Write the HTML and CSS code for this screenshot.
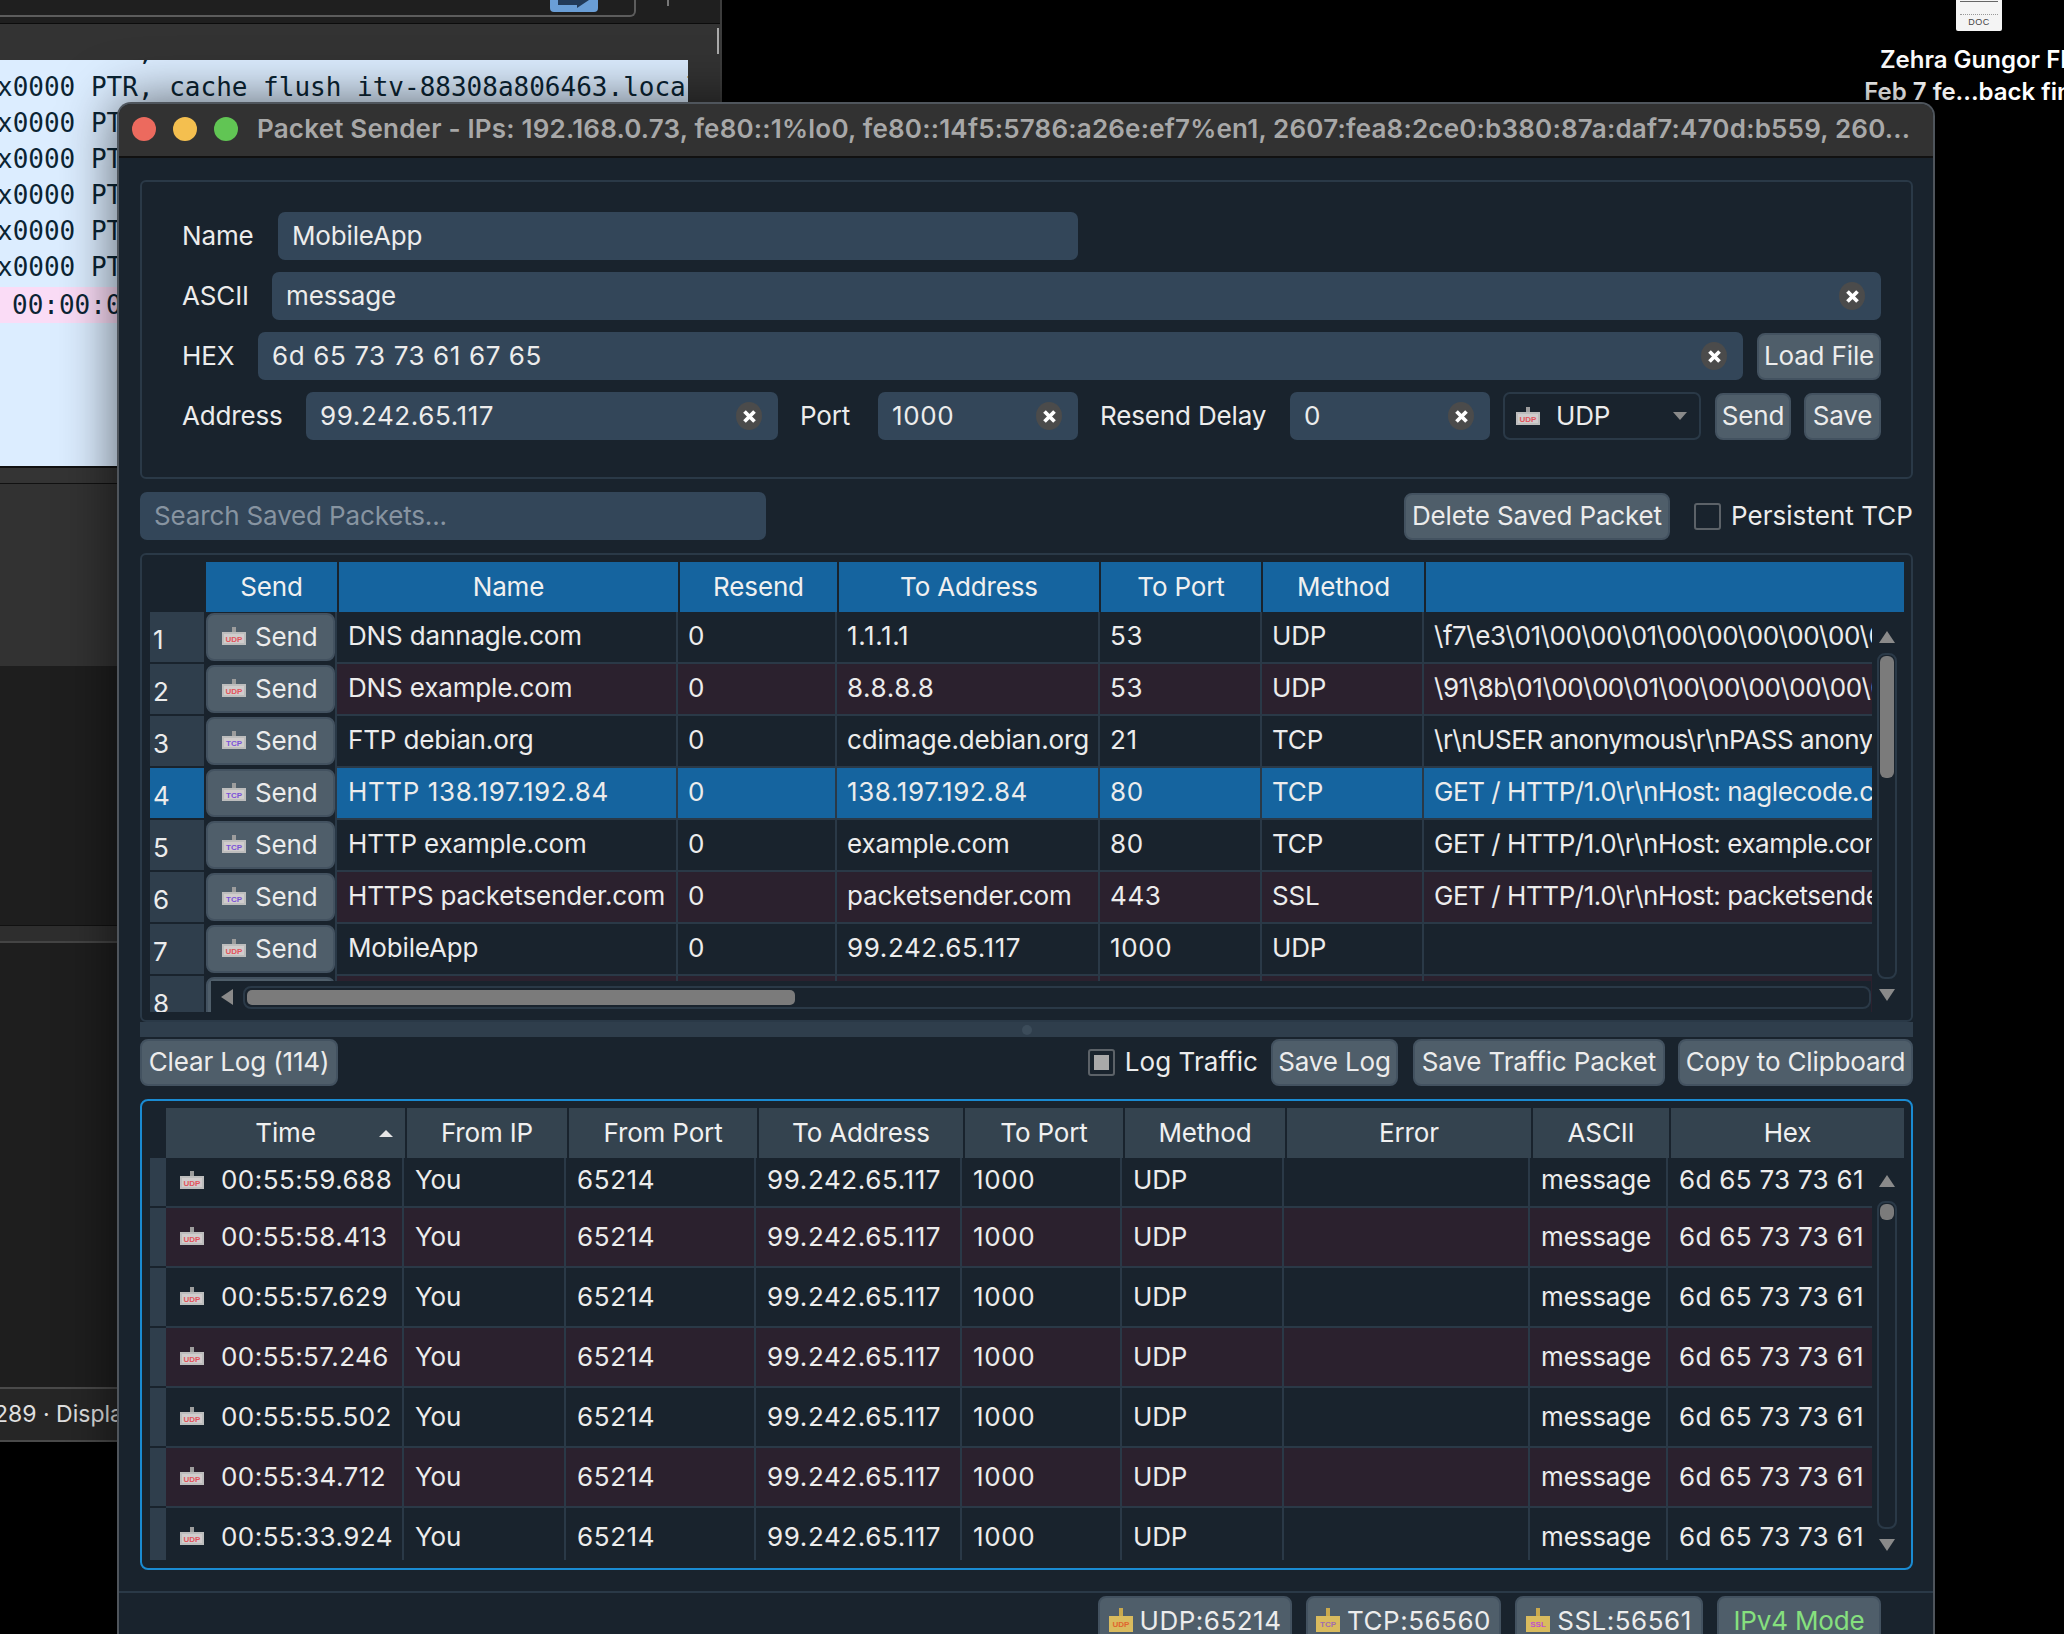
FILE: index.html
```html
<!DOCTYPE html>
<html lang="en">
<head>
    <meta charset="UTF-8">
    <meta name="viewport" content="width=device-width, initial-scale=1.0">
    <title>Packet Sender</title>
    <link rel="stylesheet" href="styles.css">
</head>
<body>
    <svg class="defs" width="0" height="0">
        <symbol id="pk-udp" viewBox="0 0 24 18">
            <path d="M10 0h4v5h-4z" fill="#9d9d9d"/><path d="M0 5h24v13H0z" fill="#bdbdbd"/><path d="M2 7h20v9H2z" fill="#d0cccc"/>
            <text x="12" y="14.5" class="pk-txt" fill="#e2545c">UDP</text>
        </symbol>
        <symbol id="pk-tcp" viewBox="0 0 24 18">
            <path d="M10 0h4v5h-4z" fill="#9d9d9d"/><path d="M0 5h24v13H0z" fill="#bdbdbd"/><path d="M2 7h20v9H2z" fill="#d0cccc"/>
            <text x="12" y="14.5" class="pk-txt" fill="#7a52d8">TCP</text>
        </symbol>
        <symbol id="st-udp" viewBox="0 0 24 24">
            <path d="M10 0h4v8h-4z" fill="#c9a94e"/><path d="M0 8h24v16H0z" fill="#d9bb5e"/>
            <text x="12" y="19" class="pk-txt" fill="#e0662e">UDP</text>
        </symbol>
        <symbol id="st-tcp" viewBox="0 0 24 24">
            <path d="M10 0h4v8h-4z" fill="#c9a94e"/><path d="M0 8h24v16H0z" fill="#d9bb5e"/>
            <text x="12" y="19" class="pk-txt" fill="#a06cb0">TCP</text>
        </symbol>
        <symbol id="st-ssl" viewBox="0 0 24 24">
            <path d="M10 0h4v8h-4z" fill="#c9a94e"/><path d="M0 8h24v16H0z" fill="#d9bb5e"/>
            <text x="12" y="19" class="pk-txt" fill="#c04fd0">SSL</text>
        </symbol>
        <symbol id="x-mark" viewBox="0 0 12 12">
            <path d="M2 2l8 8M10 2l-8 8" stroke="#fff" stroke-width="3" fill="none"/>
        </symbol>
    </svg>

    <!-- window behind -->
    <div class="term">
        <div class="term-top">
            <div class="term-box"><span class="term-btn"><svg width="32" height="12" viewBox="0 0 32 12"><path d="M0 0H31L19 8V5H0Z" fill="#223a58"/></svg></span></div>
            <span class="term-tick"></span>
        </div>
        <div class="term-bar"><span class="term-mark"></span></div>
        <div class="term-mid">
            <div class="term-list">
                <div class="term-row">x0000 PTR, cache flush itv-88308a806463.local</div>
                <div class="term-row">x0000 PTR, cache flush itv-88308a806463.local</div>
                <div class="term-row">x0000 PTR, cache flush itv-88308a806463.local</div>
                <div class="term-row">x0000 PTR, cache flush itv-88308a806463.local</div>
                <div class="term-row">x0000 PTR, cache flush itv-88308a806463.local</div>
                <div class="term-row">x0000 PTR, cache flush itv-88308a806463.local</div>
                <div class="term-row">x0000 PTR, cache flush itv-88308a806463.local</div>
                <div class="term-row term-pink">00:00:00.000000</div>
            </div>
        </div>
        <div class="term-a"></div>
        <div class="term-b"></div>
        <div class="term-c"></div>
        <div class="term-d"></div>
        <div class="term-e"></div>
        <div class="term-status">289 · Displaying 289</div>
    </div>

    <!-- desktop file -->
    <div class="doc">
        <div class="doc-icon"><span class="doc-lines"></span><span class="doc-tag">DOC</span></div>
        <div class="doc-name">Zehra Gungor FB<br>Feb 7 fe...back final</div>
    </div>

    <div class="app">
        <div class="titlebar">
            <span class="dot dot-r"></span><span class="dot dot-y"></span><span class="dot dot-g"></span>
            <span class="title">Packet Sender - IPs: 192.168.0.73, fe80::1%lo0, fe80::14f5:5786:a26e:ef7%en1, 2607:fea8:2ce0:b380:87a:daf7:470d:b559, 260...</span>
        </div>

        <div class="content">
            <div class="group">
                <div class="form-row">
                    <label class="lbl lbl-name">Name</label>
                    <div class="field f-name"><span class="val">MobileApp</span></div>
                </div>
                <div class="form-row">
                    <label class="lbl lbl-ascii">ASCII</label>
                    <div class="field f-grow"><span class="val">message</span><span class="clear"><svg width="15" height="15"><use href="#x-mark"/></svg></span></div>
                </div>
                <div class="form-row">
                    <label class="lbl lbl-hex">HEX</label>
                    <div class="field f-grow"><span class="val num">6d 65 73 73 61 67 65</span><span class="clear"><svg width="15" height="15"><use href="#x-mark"/></svg></span></div>
                    <button class="btn btn-load">Load File</button>
                </div>
                <div class="form-row">
                    <label class="lbl lbl-addr">Address</label>
                    <div class="field f-addr"><span class="val num">99.242.65.117</span><span class="clear"><svg width="15" height="15"><use href="#x-mark"/></svg></span></div>
                    <label class="lbl lbl-port">Port</label>
                    <div class="field f-port"><span class="val num">1000</span><span class="clear"><svg width="15" height="15"><use href="#x-mark"/></svg></span></div>
                    <label class="lbl lbl-delay">Resend Delay</label>
                    <div class="field f-delay"><span class="val">0</span><span class="clear"><svg width="15" height="15"><use href="#x-mark"/></svg></span></div>
                    <div class="combo"><svg class="pk" width="24" height="18"><use href="#pk-udp"/></svg><span class="combo-val">UDP</span><span class="tri-down"></span></div>
                    <button class="btn btn-send">Send</button>
                    <button class="btn btn-save">Save</button>
                </div>
            </div>

            <div class="search-row">
                <div class="field f-search"><span class="val placeholder">Search Saved Packets...</span></div>
                <button class="btn btn-delete">Delete Saved Packet</button>
                <span class="check"></span>
                <span class="check-lbl">Persistent TCP</span>
            </div>

            <div class="frame saved">
                <div class="thead saved-cols">
                    <div class="th">Send</div>
                    <div class="th">Name</div>
                    <div class="th">Resend</div>
                    <div class="th">To Address</div>
                    <div class="th">To Port</div>
                    <div class="th">Method</div>
                    <div class="th"></div>
                </div>
                <div class="tbody saved-body">
                    <div class="tr saved-row">
                        <div class="rh">1</div>
                        <div class="td td-send"><button class="btn btn-row"><svg class="pk" width="24" height="18"><use href="#pk-udp"/></svg>Send</button></div>
                        <div class="td">DNS dannagle.com</div><div class="td">0</div><div class="td num">1.1.1.1</div><div class="td num">53</div><div class="td">UDP</div>
                        <div class="td">\f7\e3\01\00\00\01\00\00\00\00\00\00\08dannagle</div>
                    </div>
                    <div class="tr saved-row alt">
                        <div class="rh">2</div>
                        <div class="td td-send"><button class="btn btn-row"><svg class="pk" width="24" height="18"><use href="#pk-udp"/></svg>Send</button></div>
                        <div class="td">DNS example.com</div><div class="td">0</div><div class="td num">8.8.8.8</div><div class="td num">53</div><div class="td">UDP</div>
                        <div class="td">\91\8b\01\00\00\01\00\00\00\00\00\00\07example</div>
                    </div>
                    <div class="tr saved-row">
                        <div class="rh">3</div>
                        <div class="td td-send"><button class="btn btn-row"><svg class="pk" width="24" height="18"><use href="#pk-tcp"/></svg>Send</button></div>
                        <div class="td">FTP debian.org</div><div class="td">0</div><div class="td">cdimage.debian.org</div><div class="td num">21</div><div class="td">TCP</div>
                        <div class="td">\r\nUSER anonymous\r\nPASS anonymous\r\n</div>
                    </div>
                    <div class="tr saved-row sel">
                        <div class="rh">4</div>
                        <div class="td td-send"><button class="btn btn-row"><svg class="pk" width="24" height="18"><use href="#pk-tcp"/></svg>Send</button></div>
                        <div class="td num">HTTP 138.197.192.84</div><div class="td">0</div><div class="td num">138.197.192.84</div><div class="td num">80</div><div class="td">TCP</div>
                        <div class="td">GET / HTTP/1.0\r\nHost: naglecode.com\r\n</div>
                    </div>
                    <div class="tr saved-row">
                        <div class="rh">5</div>
                        <div class="td td-send"><button class="btn btn-row"><svg class="pk" width="24" height="18"><use href="#pk-tcp"/></svg>Send</button></div>
                        <div class="td">HTTP example.com</div><div class="td">0</div><div class="td">example.com</div><div class="td num">80</div><div class="td">TCP</div>
                        <div class="td">GET / HTTP/1.0\r\nHost: example.com\r\n</div>
                    </div>
                    <div class="tr saved-row alt">
                        <div class="rh">6</div>
                        <div class="td td-send"><button class="btn btn-row"><svg class="pk" width="24" height="18"><use href="#pk-tcp"/></svg>Send</button></div>
                        <div class="td">HTTPS packetsender.com</div><div class="td">0</div><div class="td">packetsender.com</div><div class="td num">443</div><div class="td">SSL</div>
                        <div class="td">GET / HTTP/1.0\r\nHost: packetsender.com</div>
                    </div>
                    <div class="tr saved-row">
                        <div class="rh">7</div>
                        <div class="td td-send"><button class="btn btn-row"><svg class="pk" width="24" height="18"><use href="#pk-udp"/></svg>Send</button></div>
                        <div class="td">MobileApp</div><div class="td">0</div><div class="td num">99.242.65.117</div><div class="td num">1000</div><div class="td">UDP</div>
                        <div class="td"></div>
                    </div>
                    <div class="tr saved-row alt">
                        <div class="rh">8</div>
                        <div class="td td-send"><button class="btn btn-row"></button></div>
                        <div class="td"></div><div class="td"></div><div class="td"></div><div class="td"></div><div class="td"></div><div class="td"></div>
                    </div>
                </div>
                <!-- scrollbars lie over the table -->
                <div class="vbar saved-vbar"><span class="tri-up"></span><div class="vtrack"><span class="vthumb"></span></div><span class="tri-dn"></span></div>
                <div class="hbar"><span class="tri-left"></span><div class="htrack"><span class="hthumb"></span></div></div>
            </div>

            <div class="splitter"><span class="split-dot"></span></div>

            <div class="logbar">
                <button class="btn btn-clear">Clear Log (114)</button>
                <span class="check check-on"></span>
                <span class="check-lbl">Log Traffic</span>
                <button class="btn btn-savelog">Save Log</button>
                <button class="btn btn-savetraffic">Save Traffic Packet</button>
                <button class="btn btn-copy">Copy to Clipboard</button>
            </div>

            <div class="frame logs">
                <div class="thead log-cols">
                    <div class="th th-sort">Time<span class="sort-up"></span></div>
                    <div class="th">From IP</div>
                    <div class="th">From Port</div>
                    <div class="th">To Address</div>
                    <div class="th">To Port</div>
                    <div class="th">Method</div>
                    <div class="th">Error</div>
                    <div class="th">ASCII</div>
                    <div class="th">Hex</div>
                </div>
                <div class="tbody log-body">
                    <div class="tr log-row log-first">
                        <div class="rh"></div>
                        <div class="td td-time num"><svg class="pk" width="24" height="18"><use href="#pk-udp"/></svg>00:55:59.688</div>
                        <div class="td">You</div><div class="td num">65214</div><div class="td num">99.242.65.117</div><div class="td num">1000</div><div class="td">UDP</div><div class="td"></div><div class="td">message</div><div class="td num">6d 65 73 73 61</div>
                    </div>
                    <div class="tr log-row alt">
                        <div class="rh"></div>
                        <div class="td td-time num"><svg class="pk" width="24" height="18"><use href="#pk-udp"/></svg>00:55:58.413</div>
                        <div class="td">You</div><div class="td num">65214</div><div class="td num">99.242.65.117</div><div class="td num">1000</div><div class="td">UDP</div><div class="td"></div><div class="td">message</div><div class="td num">6d 65 73 73 61</div>
                    </div>
                    <div class="tr log-row">
                        <div class="rh"></div>
                        <div class="td td-time num"><svg class="pk" width="24" height="18"><use href="#pk-udp"/></svg>00:55:57.629</div>
                        <div class="td">You</div><div class="td num">65214</div><div class="td num">99.242.65.117</div><div class="td num">1000</div><div class="td">UDP</div><div class="td"></div><div class="td">message</div><div class="td num">6d 65 73 73 61</div>
                    </div>
                    <div class="tr log-row alt">
                        <div class="rh"></div>
                        <div class="td td-time num"><svg class="pk" width="24" height="18"><use href="#pk-udp"/></svg>00:55:57.246</div>
                        <div class="td">You</div><div class="td num">65214</div><div class="td num">99.242.65.117</div><div class="td num">1000</div><div class="td">UDP</div><div class="td"></div><div class="td">message</div><div class="td num">6d 65 73 73 61</div>
                    </div>
                    <div class="tr log-row">
                        <div class="rh"></div>
                        <div class="td td-time num"><svg class="pk" width="24" height="18"><use href="#pk-udp"/></svg>00:55:55.502</div>
                        <div class="td">You</div><div class="td num">65214</div><div class="td num">99.242.65.117</div><div class="td num">1000</div><div class="td">UDP</div><div class="td"></div><div class="td">message</div><div class="td num">6d 65 73 73 61</div>
                    </div>
                    <div class="tr log-row alt">
                        <div class="rh"></div>
                        <div class="td td-time num"><svg class="pk" width="24" height="18"><use href="#pk-udp"/></svg>00:55:34.712</div>
                        <div class="td">You</div><div class="td num">65214</div><div class="td num">99.242.65.117</div><div class="td num">1000</div><div class="td">UDP</div><div class="td"></div><div class="td">message</div><div class="td num">6d 65 73 73 61</div>
                    </div>
                    <div class="tr log-row">
                        <div class="rh"></div>
                        <div class="td td-time num"><svg class="pk" width="24" height="18"><use href="#pk-udp"/></svg>00:55:33.924</div>
                        <div class="td">You</div><div class="td num">65214</div><div class="td num">99.242.65.117</div><div class="td num">1000</div><div class="td">UDP</div><div class="td"></div><div class="td">message</div><div class="td num">6d 65 73 73 61</div>
                    </div>
                </div>
                <div class="vbar log-vbar"><span class="tri-up"></span><div class="vtrack"><span class="vthumb"></span></div><span class="tri-dn"></span></div>
            </div>
        </div>

        <div class="statusbar">
            <button class="btn st st-udp num"><svg width="24" height="24"><use href="#st-udp"/></svg>UDP:65214</button>
            <button class="btn st st-tcp num"><svg width="24" height="24"><use href="#st-tcp"/></svg>TCP:56560</button>
            <button class="btn st st-ssl num"><svg width="24" height="24"><use href="#st-ssl"/></svg>SSL:56561</button>
            <button class="btn st st-mode">IPv4 Mode</button>
        </div>
    </div>
</body>
</html>
```

FILE: styles.css
```css
* {
    box-sizing: border-box;
}
html, body {
    margin: 0;
    height: 100%;
}
body {
    position: relative;
    width: 2064px;
    height: 1634px;
    overflow: hidden;
    background: #000;
    font-family: "Inter", "Liberation Sans", sans-serif;
    font-size: 26px;
    letter-spacing: -0.15px;
    color: #ececec;
}
.defs {
    position: absolute;
}
.pk-txt {
    font-family: "Liberation Sans", sans-serif;
    font-size: 8px;
    font-weight: 700;
    text-anchor: middle;
    letter-spacing: 0;
}

/* window behind */
.term {
    position: absolute;
    left: 0;
    top: 0;
    width: 722px;
    height: 1442px;
    background: #1e1e1e;
    border-right: 2px solid #3c3c3c;
    overflow: hidden;
}
.term-top {
    height: 24px;
    background: #1f1f1f;
    border-bottom: 1px solid #0c0c0c;
    position: relative;
}
.term-box {
    width: 636px;
    height: 17px;
    border-right: 2px solid #5c5c5c;
    border-bottom: 2px solid #5c5c5c;
    border-bottom-right-radius: 6px;
    padding-left: 550px;
}
.term-btn {
    display: block;
    width: 48px;
    height: 12px;
    background: #6a9ed6;
    border-radius: 0 0 4px 4px;
    padding-left: 8px;
    overflow: hidden;
}
.term-btn svg {
    display: block;
}
.term-tick {
    position: absolute;
    left: 667px;
    top: 0;
    width: 2px;
    height: 6px;
    background: #777;
}
.term-bar {
    height: 36px;
    background: #333;
    position: relative;
}
.term-mark {
    position: absolute;
    left: 717px;
    top: 4px;
    width: 2px;
    height: 26px;
    background: #aaa;
}
.term-mid {
    background: #333;
    height: 408px;
    border-bottom: 2px solid #111;
}
.term-list {
    width: 688px;
    height: 406px;
    background: #dcedff;
    overflow: hidden;
    font-family: "DejaVu Sans Mono", monospace;
    font-size: 26px;
    letter-spacing: 0;
    color: #0b2433;
    white-space: nowrap;
}
.term-row {
    height: 36px;
    line-height: 36px;
    margin-left: -3px;
    position: relative;
    top: -27px;
}
.term-pink {
    background: #fadcf6;
    margin-left: 0;
    padding-left: 12px;
    margin-top: 2px;
}
.term-a {
    height: 16px;
    background: #343434;
    border-bottom: 1px solid #111;
}
.term-b {
    height: 182px;
    background: #323232;
}
.term-c {
    height: 260px;
    background: #1e1e1e;
    border-bottom: 1px solid #111;
}
.term-d {
    height: 17px;
    background: #2e2e2e;
    border-bottom: 2px solid #444;
}
.term-e {
    height: 444px;
    background: #1e1e1e;
}
.term-status {
    height: 55px;
    line-height: 51px;
    background: #262626;
    border-top: 2px solid #4a4a4a;
    border-bottom: 2px solid #4a4a4a;
    margin-left: -6px;
    font-size: 23px;
    letter-spacing: 0;
    color: #e0e0e0;
    white-space: nowrap;
}

/* desktop file */
.doc {
    position: absolute;
    left: 1848px;
    top: 0;
    width: 260px;
    text-align: center;
}
.doc-icon {
    width: 46px;
    height: 31px;
    margin: 0 0 0 108px;
    background: #f4f4f4;
    border-radius: 0 0 2px 2px;
    padding: 1px 4px 0;
    color: #444;
    font-size: 9px;
    letter-spacing: 0.5px;
}
.doc-lines {
    display: block;
    height: 14px;
    border-top: 1px solid #666;
    border-bottom: 1px dotted #999;
}
.doc-tag {
    display: block;
    font-family: "Liberation Sans", sans-serif;
    line-height: 14px;
}
.doc-name {
    margin-top: 13px;
    font-weight: 600;
    font-size: 24px;
    line-height: 32px;
    color: #fff;
    white-space: nowrap;
    letter-spacing: 0;
}

/* main window */
.app {
    position: absolute;
    left: 117px;
    top: 102px;
    width: 1818px;
    height: 1532px;
    background: #19232d;
    border: 2px solid #4f555c;
    border-bottom: 0;
    border-radius: 14px 14px 0 0;
    box-shadow: 0 0 55px rgba(0, 0, 0, 0.6);
    overflow: hidden;
}
.titlebar {
    height: 54px;
    background: #323232;
    border-bottom: 2px solid #111;
    display: flex;
    align-items: center;
    padding: 0 0 2px 15px;
    margin-left: -2px;
    margin-right: -2px;
}
.dot {
    width: 24px;
    height: 24px;
    border-radius: 50%;
    margin-right: 17px;
    flex: none;
}
.dot-r { background: #ec6a5e; }
.dot-y { background: #f4bf4f; }
.dot-g { background: #61c554; }
.title {
    font-weight: 600;
    color: #a8a8a8;
    white-space: nowrap;
    margin-left: 2px;
    letter-spacing: 0.2px;
    padding-bottom: 2px;
}
.content {
    padding: 22px 20px 0 21px;
    height: 1433px;
}
.num {
    letter-spacing: 0.6px;
}

.group {
    height: 299px;
    border: 2px solid #2a3947;
    border-radius: 6px;
    padding: 30px 30px 0 40px;
}
.form-row {
    display: flex;
    align-items: center;
    height: 48px;
    margin-bottom: 12px;
}
.lbl {
    flex: none;
    padding-bottom: 2px;
}
.lbl-name { width: 96px; }
.lbl-ascii { width: 90px; }
.lbl-hex { width: 76px; }
.lbl-addr { width: 124px; }
.lbl-port { width: 78px; margin-left: 22px; }
.lbl-delay { width: 190px; margin-left: 22px; }

.field {
    height: 48px;
    background: #334659;
    border-radius: 7px;
    display: flex;
    align-items: center;
    padding: 0 16px 0 14px;
    flex: none;
}
.val {
    flex: 1;
    white-space: nowrap;
    padding-bottom: 2px;
}
.placeholder {
    color: #8794a1;
}
.f-name { width: 800px; }
.f-grow { flex: 1; }
.f-addr { width: 472px; }
.f-port { width: 200px; }
.f-delay { width: 200px; }
.f-search { width: 626px; }
.clear {
    width: 26px;
    height: 28px;
    border-radius: 50%;
    background: #4b4b4b;
    display: flex;
    align-items: center;
    justify-content: center;
    flex: none;
}

.btn {
    height: 47px;
    background: #4f5e6a;
    border: 2px solid #435260;
    border-radius: 8px;
    color: #ececec;
    font: inherit;
    letter-spacing: inherit;
    padding: 0 0 2px;
    text-align: center;
    white-space: nowrap;
    flex: none;
}
.btn-load { width: 124px; margin-left: 14px; }
.btn-send { width: 76px; margin-left: 14px; }
.btn-save { width: 77px; margin-left: 13px; }

.combo {
    width: 198px;
    height: 48px;
    margin-left: 13px;
    border: 2px solid #2a3947;
    border-radius: 7px;
    display: flex;
    align-items: center;
    padding-left: 11px;
    flex: none;
    position: relative;
}
.combo-val {
    margin-left: 16px;
    padding-bottom: 2px;
}
.tri-down {
    position: absolute;
    right: 12px;
    top: 18px;
    border-left: 7px solid transparent;
    border-right: 7px solid transparent;
    border-top: 8px solid #8a8a8a;
}

.search-row {
    display: flex;
    align-items: center;
    height: 48px;
    margin-top: 13px;
}
.btn-delete {
    width: 266px;
    margin-left: auto;
}
.check {
    width: 27px;
    height: 27px;
    border: 2px solid #5c6268;
    border-radius: 3px;
    flex: none;
    margin-left: 24px;
    margin-right: 10px;
}
.check-on {
    margin-left: auto;
    background: #a9a9a9;
    background-clip: content-box;
    padding: 4px;
}
.check-lbl {
    white-space: nowrap;
    letter-spacing: 0.05px;
    padding-bottom: 2px;
}

/* tables */
.frame {
    position: relative;
    border: 2px solid #2a3947;
    border-radius: 6px;
    overflow: hidden;
    padding: 7px 0 0 8px;
}
.saved {
    height: 469px;
    margin-top: 13px;
}
.thead {
    display: grid;
    height: 50px;
    align-items: stretch;
}
.th {
    display: flex;
    align-items: center;
    justify-content: center;
    border-right: 2px solid #19232d;
    white-space: nowrap;
    color: #f0f0f0;
    position: relative;
    padding-bottom: 2px;
}
.saved .th { background: #15649f; }
.logs .th { background: #34434f; }
.saved-cols {
    margin-left: 56px;
    grid-template-columns: 133px 341px 159px 262px 162px 163px 480px;
}
.tbody {
    overflow: hidden;
}
.saved-body {
    width: 1722px;
    height: 400px;
}
.tr {
    display: grid;
    width: 100%;
}
.saved-row {
    height: 52px;
    grid-template-columns: 54px 133px 341px 159px 263px 162px 162px 448px;
}
.rh {
    background: #2f3e4c;
    border-bottom: 2px solid #19232d;
    padding-left: 3px;
    padding-top: 8px;
    line-height: 40px;
}
.td {
    display: flex;
    align-items: center;
    padding-left: 10px;
    border-right: 2px solid #2a3947;
    border-bottom: 2px solid #2a3947;
    white-space: nowrap;
    overflow: hidden;
    min-width: 0;
    background: #19232d;
}
.td:last-child {
    border-right: 0;
}
.saved-row .td {
    padding-bottom: 4px;
}
.saved-row .td:nth-child(3) {
    padding-left: 11px;
}
.saved-row .td:last-child {
    letter-spacing: -0.45px;
}
.alt .td { background: #2b212e; }
.sel .rh,
.sel .td { background: #15649f; }
.saved-row .td-send {
    padding: 1px 0 0 2px;
    border: 0;
    align-items: flex-start;
    background: #19232d;
    border-right: 2px solid #2a3947;
}
.btn-row {
    width: 129px;
    height: 48px;
    display: flex;
    align-items: center;
    padding-left: 14px;
}
.pk {
    flex: none;
}
.btn-row .pk {
    margin-right: 9px;
}

.vbar {
    position: absolute;
    right: 14px;
    width: 20px;
    display: flex;
    flex-direction: column;
    align-items: center;
}
.saved-vbar {
    top: 76px;
    height: 370px;
}
.log-vbar {
    top: 74px;
    height: 376px;
}
.tri-up,
.tri-dn {
    flex: none;
    border-left: 8px solid transparent;
    border-right: 8px solid transparent;
}
.tri-up { border-bottom: 12px solid #8a8a8a; }
.tri-dn { border-top: 12px solid #8a8a8a; }
.vtrack {
    flex: 1;
    width: 20px;
    margin: 10px 0 10px;
    border: 2px solid #2a3947;
    border-radius: 8px;
    padding: 1px;
}
.vthumb {
    display: block;
    height: 122px;
    background: #7b7b7b;
    border-radius: 6px;
}
.log-vbar .vthumb {
    height: 16px;
}
.log-vbar .vtrack {
    margin: 14px 0 10px;
}
.hbar {
    position: absolute;
    left: 69px;
    bottom: 7px;
    width: 1660px;
    height: 32px;
    background: #19232d;
    display: flex;
    align-items: center;
    padding-left: 10px;
}
.tri-left {
    flex: none;
    border-top: 8px solid transparent;
    border-bottom: 8px solid transparent;
    border-right: 12px solid #8a8a8a;
    margin-right: 10px;
}
.htrack {
    flex: 1;
    height: 23px;
    border: 2px solid #2a3947;
    border-radius: 8px;
    padding: 2px;
}
.hthumb {
    display: block;
    width: 548px;
    height: 15px;
    background: #7b7b7b;
    border-radius: 5px;
}

.splitter {
    height: 15px;
    background: #2f3e4c;
    display: flex;
    align-items: center;
    justify-content: center;
}
.split-dot {
    width: 10px;
    height: 10px;
    border-radius: 50%;
    background: #3c4c5a;
}
.logbar {
    display: flex;
    align-items: center;
    height: 46px;
    margin-top: 2px;
}
.btn-clear { width: 198px; }
.btn-savelog { width: 127px; margin-left: 13px; }
.btn-savetraffic { width: 252px; margin-left: 15px; }
.btn-copy { width: 235px; margin-left: 13px; }

.logs {
    height: 471px;
    margin-top: 14px;
    border-color: #1a8bd2;
    border-radius: 8px;
}
.log-cols {
    margin-left: 16px;
    grid-template-columns: 241px 162px 190px 206px 160px 162px 246px 138px 235px;
}
.log-body {
    width: 1722px;
    height: 402px;
}
.log-row {
    height: 60px;
    grid-template-columns: 16px 238px 162px 190px 206px 160px 162px 246px 138px 204px;
}
.log-row .td {
    padding-left: 11px;
    padding-bottom: 2px;
}
.log-row .td:last-child {
    letter-spacing: 0.3px;
}
.log-row .td-time {
    padding-left: 14px;
    letter-spacing: 0.45px;
}
.log-first { height: 50px; }
.log-first .td { padding-bottom: 5px; }
.log-row .td-time .pk { margin-right: 17px; }
.sort-up {
    position: absolute;
    right: 12px;
    top: 22px;
    border-left: 7px solid transparent;
    border-right: 7px solid transparent;
    border-bottom: 7px solid #e6e6e6;
}

.statusbar {
    height: 60px;
    margin-left: -2px;
    margin-right: -2px;
    border-top: 2px solid #2a3947;
    padding: 3px 54px 0 0;
    display: flex;
    justify-content: flex-end;
    gap: 14px;
}
.st {
    height: 50px;
    display: flex;
    align-items: center;
    justify-content: center;
}
.st.num { letter-spacing: 0.5px; }
.st svg { margin-right: 7px; }
.st-udp { width: 194px; }
.st-tcp { width: 195px; }
.st-ssl { width: 188px; }
.st-mode { width: 164px; color: #86e07e; }
```
